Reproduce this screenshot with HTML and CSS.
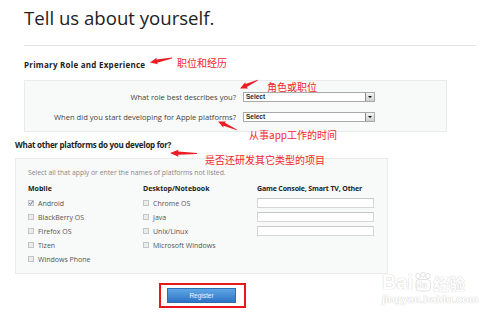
FILE: index.html
```html
<!DOCTYPE html>
<html>
<head>
<meta charset="utf-8">
<link rel="stylesheet" href="styles.css">
</head>
<body>
<div class="page">
  <h1 class="title">Tell us about yourself.</h1>
  <div class="rule"></div>
  <h2 class="sec sec-primary">Primary Role and Experience</h2>
  <div class="panel panel-role">
    <div class="row">
      <span class="lbl">What role best describes you?</span>
      <div class="sel"><span class="sel-text">Select</span><span class="sel-btn"><i class="tri"></i></span></div>
    </div>
    <div class="row">
      <span class="lbl">When did you start developing for Apple platforms?</span>
      <div class="sel"><span class="sel-text">Select</span><span class="sel-btn"><i class="tri"></i></span></div>
    </div>
  </div>
  <h2 class="sec sec-other">What other platforms do you develop for?</h2>
  <div class="panel panel-plat">
    <p class="hint">Select all that apply or enter the names of platforms not listed.</p>
    <div class="cols">
      <div class="col col-mobile">
        <div class="colh">Mobile</div>
        <div class="opt"><span class="cb cb-on"><svg viewBox="0 0 6 6" width="6" height="6"><path d="M1.2 3.1 L2.5 4.4 L4.9 1.2" fill="none" stroke="#5a6f9a" stroke-width="1"/></svg></span>Android</div>
        <div class="opt"><span class="cb"></span>BlackBerry OS</div>
        <div class="opt"><span class="cb"></span>Firefox OS</div>
        <div class="opt"><span class="cb"></span>Tizen</div>
        <div class="opt"><span class="cb"></span>Windows Phone</div>
      </div>
      <div class="col col-desk">
        <div class="colh">Desktop/Notebook</div>
        <div class="opt"><span class="cb"></span>Chrome OS</div>
        <div class="opt"><span class="cb"></span>Java</div>
        <div class="opt"><span class="cb"></span>Unix/Linux</div>
        <div class="opt"><span class="cb"></span>Microsoft Windows</div>
      </div>
      <div class="col col-other">
        <div class="colh colh-other">Game Console, Smart TV, Other</div>
        <div class="opt"><span class="txt"></span></div>
        <div class="opt"><span class="txt"></span></div>
        <div class="opt"><span class="txt"></span></div>
      </div>
    </div>
  </div>
  <div class="reg-frame"><div class="reg">Register</div></div>
</div>

<div class="notes">
  <svg class="arrows" width="500" height="317" viewBox="0 0 500 317">
    <g fill="#ec1c24">
      <polygon transform="translate(172 58) rotate(168.4)" points="0,-0.4 15.5,-1.6 15,-3.4 22.5,0 15,3.4 15.5,1.6 0,0.4"/>
      <polygon transform="translate(258 80) rotate(154.7)" points="0,-0.4 13,-1.6 12.5,-3.4 19.9,0 12.5,3.4 13,1.6 0,0.4"/>
      <polygon transform="translate(237 130) rotate(204.1)" points="0,-0.4 14,-1.6 13.5,-3.4 20.8,0 13.5,3.4 14,1.6 0,0.4"/>
      <polygon transform="translate(197 153.5) rotate(181)" points="0,-0.5 19,-1.7 18.5,-3.5 27,0 18.5,3.5 19,1.7 0,0.5"/>
    </g>
  </svg>
  <span class="note note1">职位和经历</span>
  <span class="note note2">角色或职位</span>
  <span class="note note3">从事app工作的时间</span>
  <span class="note note4">是否还研发其它类型的项目</span>
  <div class="wm">
    <div class="wm-top"><span class="wm-bai">Bai</span><span class="wm-paw"><svg viewBox="0 0 18 20" width="18" height="20"><g fill="#fff" stroke="#dcdcdc" stroke-width="0.8"><ellipse cx="4" cy="4" rx="2.2" ry="2.8"/><ellipse cx="9" cy="2.6" rx="2.2" ry="2.4"/><ellipse cx="14" cy="4" rx="2.2" ry="2.8"/><path d="M2 11 Q2 7.5 5 7.5 L13 7.5 Q16.5 7.5 16.5 11 L16.5 16 Q16.5 19 13.5 19 L4.5 19 Q2 19 2 16 Z"/></g></svg><span class="wm-du">du</span></span><span class="wm-cn">经验</span></div>
    <div class="wm-url">jingyan.baidu.com</div>
  </div>
</div>
</body>
</html>
```

FILE: styles.css
```css
html, body {
  margin: 0;
  padding: 0;
  background: #ffffff;
}
body {
  width: 500px;
  height: 317px;
  overflow: hidden;
  position: relative;
  font-family: "Open Sans", "DejaVu Sans", sans-serif;
  color: #333;
}
.page {
  padding-left: 24px;
  width: 452px;
}
.title {
  margin: 7px 0 0 0;
  font-size: 18.6px;
  line-height: 22px;
  font-weight: 400;
  color: #222;
}
.rule {
  margin-top: 16px;
  height: 1px;
  background: #e6e6e6;
}
.sec {
  margin: 0;
  font-size: 8px;
  line-height: 12px;
  font-weight: 700;
  color: #222;
  white-space: nowrap;
}
.sec-primary {
  margin-top: 13px;
  letter-spacing: 0.25px;
}
.panel {
  box-sizing: border-box;
  border: 1px solid #ebebeb;
  background: #f8f9f9;
}
.panel-role {
  margin-top: 9px;
  width: 423px;
  padding: 11px 0 9px 0;
  display: flex;
  flex-direction: column;
  gap: 10px;
}
.row {
  display: flex;
  align-items: center;
  height: 10px;
}
.lbl {
  width: 211px;
  margin-right: 7px;
  text-align: right;
  font-size: 7.6px;
  line-height: 10px;
  color: #444;
  white-space: nowrap;
}
.sel {
  box-sizing: border-box;
  width: 132px;
  height: 10px;
  border: 1px solid #a8a8a8;
  background: #fff;
  display: flex;
  align-items: center;
}
.sel-text {
  padding-left: 2px;
  font-family: "Liberation Sans", Arial, sans-serif;
  font-weight: 700;
  font-size: 6.5px;
  line-height: 8px;
  color: #2a2a2a;
}
.sel-btn {
  margin-left: auto;
  box-sizing: border-box;
  width: 9px;
  height: 8px;
  border-left: 1px solid #8a8a8a;
  background: linear-gradient(#f2f2f2, #cfcfcf);
  display: flex;
  align-items: center;
  justify-content: center;
}
.tri {
  width: 0;
  height: 0;
  border-left: 2px solid transparent;
  border-right: 2px solid transparent;
  border-top: 2px solid #111;
}
.sec-other {
  margin-top: 7px;
  margin-left: -9px;
  letter-spacing: -0.27px;
}
.panel-plat {
  margin-top: 7px;
  margin-left: -9px;
  width: 373px;
  padding: 9px 0 7px 12px;
}
.hint {
  margin: 0;
  font-size: 6.8px;
  line-height: 10px;
  color: #888;
  white-space: nowrap;
}
.cols {
  margin-top: 6px;
  display: flex;
}
.col-mobile {
  width: 115px;
}
.col-desk {
  width: 114px;
}
.colh {
  font-size: 7px;
  line-height: 10px;
  font-weight: 700;
  color: #222;
  margin-bottom: 2px;
  white-space: nowrap;
}
.colh-other {
  letter-spacing: -0.15px;
}
.opt {
  height: 14px;
  display: flex;
  align-items: center;
  font-size: 7px;
  color: #555;
  white-space: nowrap;
}
.cb {
  box-sizing: border-box;
  width: 6px;
  height: 6px;
  margin-right: 4px;
  border: 1px solid #c4c4c4;
  background: #ececec;
  position: relative;
}
.cb-on svg {
  position: absolute;
  left: -1px;
  top: -1px;
}
.txt {
  box-sizing: border-box;
  width: 117px;
  height: 10px;
  border: 1px solid #d6d6d6;
  border-top-color: #c8c8c8;
  background: #fff;
}
.reg-frame {
  margin-top: 9px;
  margin-left: 135px;
  width: 87px;
  box-sizing: border-box;
  border: 2px solid #e8161d;
  padding: 3px 8px 3px 6px;
}
.reg {
  box-sizing: border-box;
  width: 69px;
  height: 15px;
  border: 1px solid #2f6db3;
  background: linear-gradient(#5fa6e6, #2f74c6);
  color: #f2f6fb;
  font-family: "Liberation Sans", Arial, sans-serif;
  font-size: 6.5px;
  line-height: 13px;
  text-align: center;
}
.notes {
  position: absolute;
  left: 0;
  top: 0;
  width: 500px;
  height: 317px;
  pointer-events: none;
}
.arrows {
  position: absolute;
  left: 0;
  top: 0;
}
.note {
  position: absolute;
  font-family: "Noto Sans CJK SC", "Open Sans", sans-serif;
  font-size: 10px;
  line-height: 12px;
  color: #f0262c;
  white-space: nowrap;
}
.note1 { left: 177px; top: 57px; }
.note2 { left: 267px; top: 81px; }
.note3 { left: 249px; top: 129px; }
.note4 { left: 205px; top: 154px; }
.wm {
  position: absolute;
  left: 382px;
  top: 270px;
  color: #fff;
  text-shadow: 0 0 1px #cfcfcf, 0 0 1px #cfcfcf;
}
.wm-top {
  display: flex;
  align-items: flex-end;
  height: 22px;
}
.wm-bai {
  font-family: "Liberation Sans", Arial, sans-serif;
  font-weight: 700;
  font-size: 20px;
  line-height: 20px;
}
.wm-paw {
  position: relative;
  width: 18px;
  height: 20px;
  margin-left: 1px;
}
.wm-paw svg {
  position: absolute;
  left: 0;
  top: 0;
}
.wm-du {
  position: absolute;
  left: 2px;
  top: 8px;
  font-family: "Liberation Sans", Arial, sans-serif;
  font-weight: 700;
  font-size: 9px;
  line-height: 10px;
}
.wm-cn {
  font-family: "Noto Sans CJK SC", sans-serif;
  font-weight: 700;
  font-size: 16px;
  line-height: 18px;
  margin-left: 1px;
}
.wm-url {
  font-family: "Liberation Sans", Arial, sans-serif;
  font-weight: 700;
  font-size: 11px;
  line-height: 12px;
  margin-top: 1px;
}
```
